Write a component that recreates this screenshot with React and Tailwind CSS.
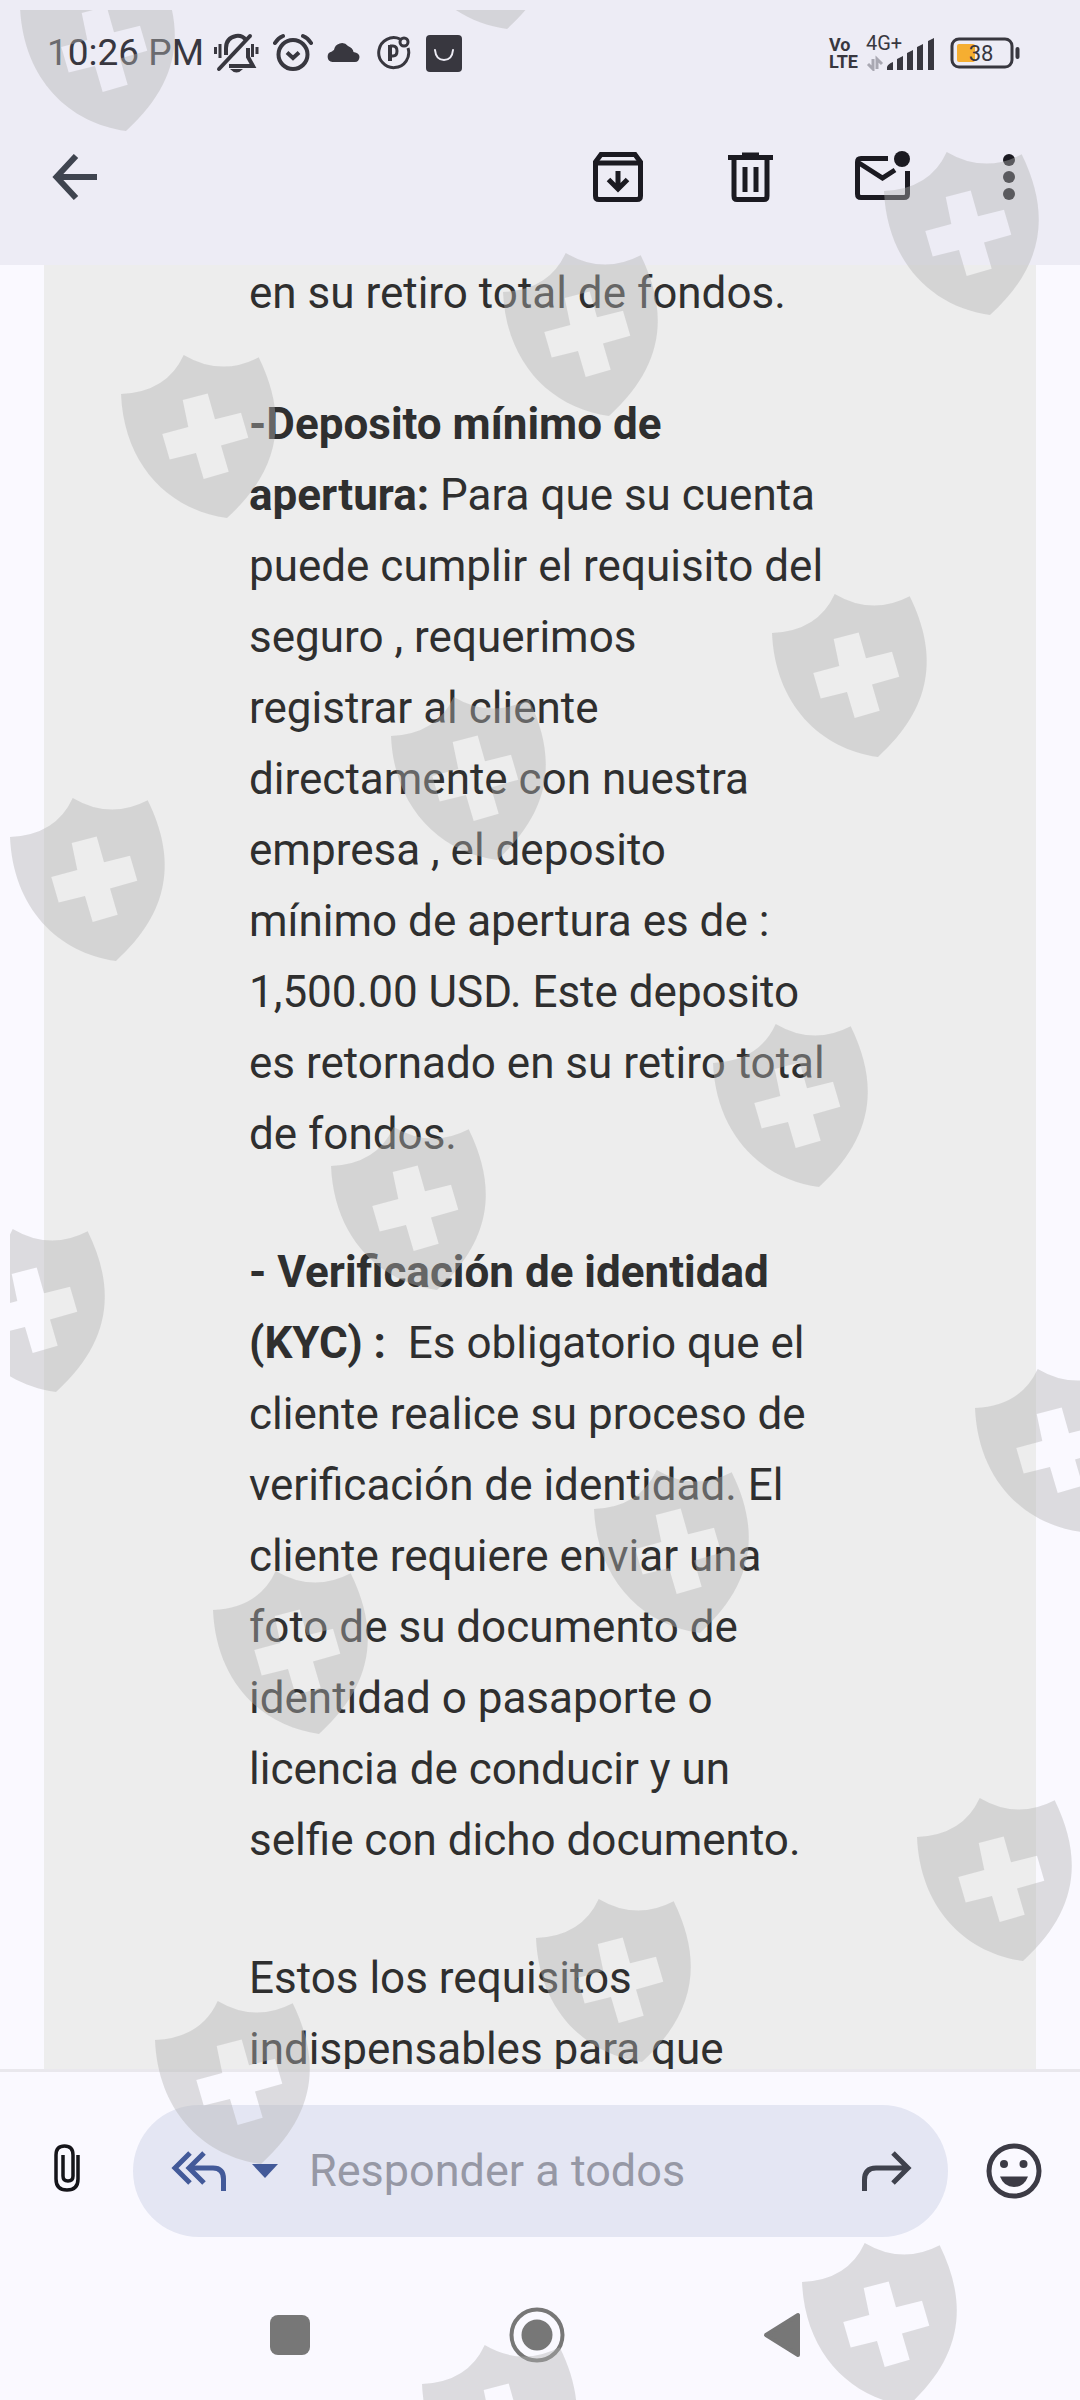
import { useState } from 'react';

const shields = [
  [20, -32], [401, -134],
  [121, 355], [503, 253], [884, 152],
  [10, 798], [391, 697], [772, 594],
  [-50, 1229], [331, 1127], [713, 1024],
  [213, 1571], [594, 1470], [975, 1369],
  [155, 2001], [536, 1899], [917, 1798],
  [422, 2345], [802, 2243],
];

// Shield pattern laid over the whole screen
const ShieldOverlay = () => (
  <div className="absolute top-[10px] left-[10px] right-0 bottom-0 overflow-hidden pointer-events-none" aria-hidden="true">
    <svg className="w-full h-full" fill="#b2b2b2" fillOpacity="0.42">
      {shields.map(([x, y]) => (
        <path
          key={`${x},${y}`}
          transform={`translate(${x - 10} ${y - 10})`}
          fillRule="evenodd"
          d="M0 39 Q46 37 62.7 0 Q100 22 137.7 2.3 C167 62 160 114 106 163 C48 155 3 110 0 39Z M61.7 45 L67.3 72 L41.3 79 L48.7 104.4 L75 98 L82.7 124 L107.7 116.7 L100 90.4 L127.3 82.7 L120 57.7 L94 64.3 L86.7 38.4Z"
        />
      ))}
    </svg>
  </div>
);

const StatusBar = () => (
  <div className="flex items-center justify-between h-[106px] pl-[47px] pr-[60px] text-[#38373f]">
    <div className="flex items-center">
      <span className="text-[37px] leading-[40px] mr-[10px]">10:26 PM</span>
      <svg className="mr-[14px]" width="45" height="40" viewBox="0 0 45 40" fill="none" stroke="currentColor" strokeWidth="4">
        <path d="M12 22 V15 Q12 5 22 3 Q28 2 32 7" />
        <path d="M34 15 V24 L39 33 H15" />
        <path d="M5 36 L36 3" strokeLinecap="round" />
        <path d="M1.5 14 V21 M6 11 V25 M38.500 11 V24 M43 14 V21" strokeWidth="3" />
        <path d="M16 36 H29 Q22.500 43 16 36Z" fill="currentColor" stroke="none" />
      </svg>
      <svg className="mr-[14px]" width="40" height="40" viewBox="0 0 40 40" fill="none" stroke="currentColor" strokeWidth="4">
        <circle cx="20" cy="21.500" r="14.500" />
        <path d="M14 19.500 L20 25 L26 19.500" />
        <path d="M2 10 Q5 5 10 3 M30 3 Q35 5 38 10" strokeLinecap="round" />
      </svg>
      <svg className="mr-[17px]" width="33" height="24" viewBox="0 0 33 24" fill="currentColor">
        <path d="M5.500 21 A5.300 5.300 0 0 1 5 10.500 Q6 9 7 9 A8 8 0 0 1 21 5 Q26 7 26.500 11 Q32.500 12 32.500 16 Q32 21 28 21Z" />
      </svg>
      <svg className="mr-[15px]" width="34" height="36" viewBox="0 0 34 36" fill="none" stroke="currentColor" strokeWidth="3">
        <path d="M23 4 A15 15 0 1 0 31 13" />
        <circle cx="27" cy="7" r="4" />
        <path d="M13 26 V10" strokeWidth="4" />
        <path d="M13 11 H16 Q20 11 20 16 Q20 21 16 21 H13" strokeWidth="3" />
      </svg>
      <svg width="36" height="38" viewBox="0 0 36 38">
        <rect y="1" width="36" height="37" rx="4" fill="currentColor" />
        <path d="M9 16 Q10 26 18 26 Q26 26 27 16" fill="none" stroke="#edecf5" strokeWidth="2" strokeLinecap="round" />
      </svg>
    </div>
    <div className="flex items-center">
      <div className="text-[18px] leading-[17px] font-bold mr-2">
        <div>Vo</div>
        <div>LTE</div>
      </div>
      <div className="relative mr-[14px]">
        <svg width="70" height="36" viewBox="0 0 70 36" fill="currentColor">
          <path d="M21 35 V32 Q22 29 27 27 V35Z M31 35 V24 L37 21 V35Z M41 35 V18 L47 15 V35Z M51 35 V12 L57 9 V35Z M62 35 V6 L68 3 V35Z" />
          <path d="M7 24 V34 L2 29 M11 34 V24 L16 29" fill="none" stroke="#a9a8b2" strokeWidth="3" />
        </svg>
        <span className="absolute -top-[2px] left-0 text-[20px] leading-[20px]">4G+</span>
      </div>
      <svg width="70" height="32" viewBox="0 0 70 32">
        <rect x="7" y="7" width="18" height="18" rx="2" fill="#f5ae31" />
        <rect x="2" y="2" width="60" height="28" rx="7" fill="none" stroke="currentColor" strokeWidth="3" />
        <path d="M67.500 12 V20" stroke="currentColor" strokeWidth="4" strokeLinecap="round" />
        <text x="31" y="24" fontSize="22" fontFamily="Roboto" textAnchor="middle" fill="currentColor">38</text>
      </svg>
    </div>
  </div>
);

const Toolbar = () => (
  <div className="flex items-center justify-between h-[159px] pb-[17px] pl-[52px] pr-[65px] text-[#1b1a21]">
    <button type="button" aria-label="Atrás">
      <svg width="46" height="46" viewBox="0 0 46 46" fill="none" stroke="#3f444f" strokeWidth="6">
        <path d="M45 23 H5 M24 2 L4.500 23 L24 44" />
      </svg>
    </button>
    <div className="flex items-center">
      <button type="button" aria-label="Archivar" className="mr-[85px]">
        <svg width="50" height="52" viewBox="0 0 50 52" fill="none" stroke="currentColor" strokeWidth="5">
          <path d="M2.500 11 L8 3.500 H42 L47.500 11 V45 Q47.500 48.500 44 48.500 H6 Q2.500 48.500 2.500 45Z" />
          <path d="M3 12 H47" strokeWidth="5" />
          <path d="M25 20 V36 M15.500 28.500 L25 38 L34.500 28.500" />
        </svg>
      </button>
      <button type="button" aria-label="Eliminar" className="mr-[82px]">
        <svg width="45" height="52" viewBox="0 0 45 52" fill="none" stroke="currentColor" strokeWidth="5">
          <path d="M0 6.500 H45 M14 4 H31" />
          <path d="M6 8 V45 Q6 48.500 9 48.500 H36 Q39 48.500 39 45 V8" />
          <path d="M17 16 V41 M28 16 V41" />
        </svg>
      </button>
      <button type="button" aria-label="Marcar como no leído" className="mr-[92px]">
        <svg width="56" height="52" viewBox="0 0 56 52" fill="none" stroke="currentColor" strokeWidth="5">
          <path d="M33 7.500 H6 Q2.500 7.500 2.500 11 V43 Q2.500 46.500 6 46.500 H49 Q52.500 46.500 52.500 43 V20" />
          <path d="M4 12 L27.500 27 L40 19" />
          <circle cx="47" cy="8" r="8" fill="currentColor" stroke="none" />
        </svg>
      </button>
      <button type="button" aria-label="Más opciones">
        <svg width="12" height="46" viewBox="0 0 12 46" fill="currentColor">
          <circle cx="6" cy="6" r="6" />
          <circle cx="6" cy="23" r="6" />
          <circle cx="6" cy="40" r="6" />
        </svg>
      </button>
    </div>
  </div>
);

const Message = () => (
  <main className="flex-1 min-h-0 overflow-hidden border-b-[3px] border-[#e9e8ed] bg-[#faf9ff] px-11">
    <article className="h-full overflow-hidden bg-[#ededed] pl-[205px] text-[44px] leading-[71px] text-[#2f2f2f] whitespace-nowrap">
      <p className="-mt-[7px] mb-[60px]">en su retiro total de fondos.</p>
      <p className="mb-[67px]">
        <strong>-Deposito mínimo de<br />apertura:</strong> Para que su cuenta<br />
        puede cumplir el requisito del<br />
        seguro , requerimos<br />
        registrar al cliente<br />
        directamente con nuestra<br />
        empresa , el deposito<br />
        mínimo de apertura es de :<br />
        1,500.00 USD. Este deposito<br />
        es retornado en su retiro total<br />
        de fondos.
      </p>
      <p className="mb-[67px]">
        <strong>- Verificación de identidad<br />(KYC) :&nbsp;</strong> Es obligatorio que el<br />
        cliente realice su proceso de<br />
        verificación de identidad. El<br />
        cliente requiere enviar una<br />
        foto de su documento de<br />
        identidad o pasaporte o<br />
        licencia de conducir y un<br />
        selfie con dicho documento.
      </p>
      <p>
        Estos los requisitos<br />
        indispensables para que
      </p>
    </article>
  </main>
);

const ReplyBar = () => {
  const [reply, setReply] = useState('');

  return (
    <div className="flex items-center pt-[33px] pl-[54px] pr-[38px]">
      <button type="button" aria-label="Adjuntar archivo" className="mr-[53px]">
        <svg width="26" height="54" viewBox="0 0 26 54" fill="none" stroke="#15151a" strokeWidth="3.5">
          <path d="M24 11 V35 Q24 46 13 46 Q2 46 2 35 V11 Q2 2 10.500 2 Q19 2 19 11 V32 Q19 37 14 37 Q9 37 9 32 V11" />
        </svg>
      </button>
      <div className="flex flex-1 min-w-0 items-center h-[132px] rounded-full bg-[#e4e6f3] pl-[38px] pr-9">
        <button type="button" aria-label="Responder a todos" className="mr-[25px] shrink-0 text-[#435a99]">
          <svg width="56" height="40" viewBox="0 0 56 40" fill="none" stroke="currentColor" strokeWidth="5">
            <path d="M19 2 L4 17 L19 32 M33 2 L18 17 L33 32" />
            <path d="M18 17 H42 Q52.500 17 52.500 28 V40" />
          </svg>
        </button>
        <button type="button" aria-label="Tipo de respuesta" className="mr-[31px] shrink-0 text-[#435a99]">
          <svg width="26" height="14" viewBox="0 0 26 14" fill="currentColor">
            <path d="M0 0 H26 L13 14Z" />
          </svg>
        </button>
        <input
          type="text"
          aria-label="Mensaje"
          value={reply}
          onChange={(e) => setReply(e.target.value)}
          placeholder="Responder a todos"
          className="flex-1 min-w-0 bg-transparent text-[45px] leading-[56px] text-[#2f2f2f] placeholder:text-[#9698a5] focus:outline-none"
        />
        <button type="button" aria-label="Reenviar" className="shrink-0">
          <svg width="50" height="40" viewBox="0 0 50 40" fill="none" stroke="#3f424d" strokeWidth="5">
            <path d="M2.500 40 V29 Q2.500 17 14 17 H46 M31 2 L46 17 L31 32" />
          </svg>
        </button>
      </div>
      <button type="button" aria-label="Emoji" className="ml-[38px]">
        <svg width="56" height="56" viewBox="0 0 56 56" fill="#3c3b45">
          <circle cx="28" cy="28" r="25" fill="none" stroke="#3c3b45" strokeWidth="5" />
          <circle cx="18" cy="21" r="4" />
          <circle cx="37.500" cy="21" r="4" />
          <path d="M14 33.500 H42 Q38 44 28 44 Q18 44 14 33.500Z" />
        </svg>
      </button>
    </div>
  );
};

const NavBar = () => (
  <nav className="flex items-center justify-between h-[163px] pt-8 pl-[270px] pr-[279px] text-[#777777]">
    <button type="button" aria-label="Recientes">
      <div className="size-10 rounded-lg bg-[#777777]" />
    </button>
    <button type="button" aria-label="Inicio">
      <svg width="56" height="56" viewBox="0 0 56 56" fill="none" stroke="currentColor">
        <circle cx="28" cy="28" r="25.500" strokeWidth="4" />
        <circle cx="28" cy="28" r="15.500" fill="currentColor" stroke="none" />
      </svg>
    </button>
    <button type="button" aria-label="Volver">
      <svg width="38" height="46" viewBox="0 0 38 46" fill="currentColor" stroke="currentColor" strokeWidth="4" strokeLinejoin="round">
        <path d="M35 3 V43 L3 23Z" />
      </svg>
    </button>
  </nav>
);

const App = () => {
  return (
    <div className="relative flex flex-col h-screen overflow-hidden bg-[#faf9ff] font-['Roboto',sans-serif]">
      <header className="bg-[#edecf5]">
        <StatusBar />
        <Toolbar />
      </header>
      <Message />
      <ReplyBar />
      <NavBar />
      <ShieldOverlay />
    </div>
  );
};

export default App;
